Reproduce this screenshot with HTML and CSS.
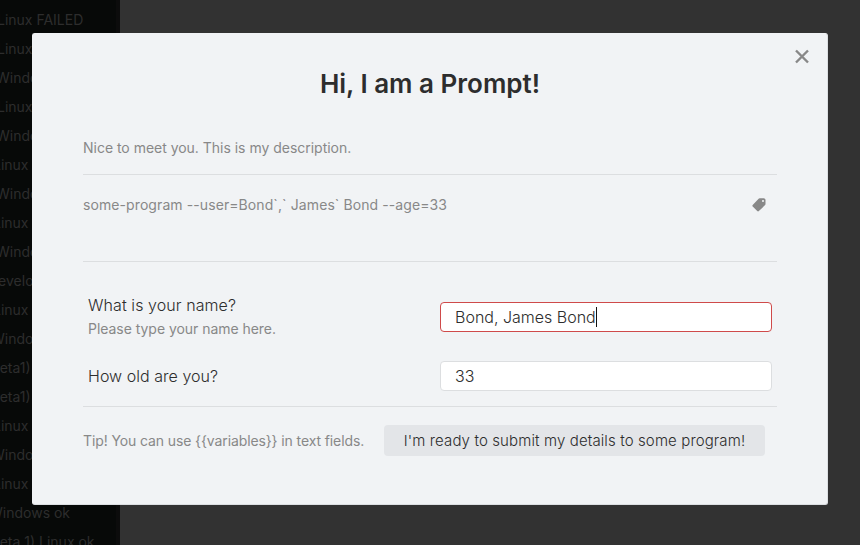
FILE: index.html
```html
<!DOCTYPE html>
<html lang="en">
<head>
<meta charset="utf-8">
<title>Prompt</title>
<link rel="stylesheet" href="styles.css">
</head>
<body>
<div class="app">
  <ul class="sidebar">
    <li class="s1">Linux FAILED</li>
    <li class="s1">Linux</li>
    <li class="s2">Windows</li>
    <li class="s1">Linux</li>
    <li class="s2">Windows</li>
    <li class="s3">Linux</li>
    <li class="s2">Windows</li>
    <li class="s3">Linux</li>
    <li class="s2">Windows</li>
    <li class="s4">Develop</li>
    <li class="s5">Linux ok</li>
    <li class="s6">Windows</li>
    <li class="s7">(beta1)</li>
    <li class="s7">(beta1)</li>
    <li class="s5">Linux ok</li>
    <li class="s6">Windows</li>
    <li class="s5">Linux ok</li>
    <li class="s8">Windows ok</li>
    <li class="s7">(beta 1) Linux ok</li>
  </ul>
</div>
<div class="overlay">
  <main class="modal">
    <button class="close" aria-label="Close"><svg width="16" height="16" viewBox="0 0 16 16"><path d="M2 2.5 14 14.5M14 2.5 2 14.5"/></svg></button>
    <h1>Hi, I am a Prompt!</h1>
    <p class="description">Nice to meet you. This is my description.</p>
    <div class="preview">
      <span class="command">some-program --user=Bond`,` James` Bond --age=33</span>
      <svg class="tag" width="16" height="16" viewBox="0 0 16 16"><path fill-rule="evenodd" d="M8.6 1.2h4.1c1 0 1.8.8 1.8 1.8v4.1c0 .4-.1.7-.4 1l-6.2 6c-.5.5-1.2.5-1.7 0L1.7 9.6c-.5-.5-.5-1.2 0-1.7l5.9-6.2c.3-.3.6-.5 1-.5ZM12 2.9a1 1 0 1 0 0 2 1 1 0 0 0 0-2Z"/></svg>
    </div>
    <div class="field first">
      <div><div class="label">What is your name?</div><div class="hint">Please type your name here.</div></div>
      <div class="input focus">Bond, James Bond<i class="caret"></i></div>
    </div>
    <div class="field second">
      <div class="label">How old are you?</div>
      <div class="input">33</div>
    </div>
    <footer>
      <span class="tip">Tip! You can use {{variables}} in text fields.</span>
      <button class="submit">I'm ready to submit my details to some program!</button>
    </footer>
  </main>
</div>
</body>
</html>
```
FILE: styles.css
```css
* { box-sizing: border-box; }
body {
  margin: 0;
  width: 860px;
  height: 545px;
  overflow: hidden;
  position: relative;
  background: #323232;
  font-family: Inter, "Liberation Sans", sans-serif;
  font-size: 14px;
  color: #888;
}
button { font: inherit; border: 0; background: none; padding: 0; }
.app { height: 545px; overflow: hidden; }
.sidebar {
  width: 120px;
  height: 556px;
  margin: 0;
  padding: 5px 0 0;
  list-style: none;
  overflow: hidden;
  background: linear-gradient(90deg, #070908 0 116px, #0c0c0c 116px);
  color: #2d2d2d;
}
.sidebar li { height: 29px; line-height: 29px; white-space: nowrap; }
.sidebar .s1 { margin-left: -3px; }
.sidebar .s2 { margin-left: -4px; }
.sidebar .s3 { margin-left: -7px; }
.sidebar .s4 { margin-left: -12px; }
.sidebar .s5 { margin-left: -7px; }
.sidebar .s6 { margin-left: -9px; }
.sidebar .s7 { margin-left: -14px; }
.sidebar .s8 { margin-left: -11px; }
.overlay { position: absolute; inset: 0; padding: 33px 32px 40px; }
.modal {
  position: relative;
  height: 472px;
  padding: 33px 50px 0;
  background: #f1f3f5;
  border: 1px solid #dcdfe2;
  border-top-color: #f1f3f5;
  border-left-color: #f1f3f5;
  border-radius: 3px;
}
.close { position: absolute; top: 14px; right: 17px; width: 16px; height: 16px; }
.close svg { display: block; fill: none; stroke: #888; stroke-width: 2.4; }
h1 {
  margin: 0;
  height: 34px;
  line-height: 34px;
  font-size: 26px;
  font-weight: 570;
  letter-spacing: 0;
  text-align: center;
  color: #2d2d2d;
}
.description {
  margin: 37px 0 0;
  height: 37px;
  line-height: 20px;
  letter-spacing: -0.02px;
  border-bottom: 1px solid #dcdee0;
}
.preview {
  display: flex;
  justify-content: space-between;
  height: 87px;
  padding: 20px 10px 0 0;
  line-height: 20px;
  border-bottom: 1px solid #dcdee0;
}
.command { letter-spacing: 0.09px; }
.tag { margin-top: 2px; fill: #888; }
.field {
  display: grid;
  grid-template-columns: 352px 332px;
  padding: 0 5px;
}
.first { padding-top: 32px; height: 92px; }
.first .input { margin-top: 8px; }
.second { height: 53px; padding-top: 7px; border-bottom: 1px solid #dcdee0; }
.label { font-size: 16px; line-height: 22px; font-weight: 300; letter-spacing: 0.08px; color: #2d2d2d; }
.second .label { line-height: 30px; letter-spacing: 0.04px; }
.hint { line-height: 20px; margin-top: 3px; letter-spacing: -0.04px; }
.input {
  display: flex;
  align-items: center;
  height: 30px;
  padding: 0 14px;
  border: 1px solid #dcdee0;
  border-radius: 4px;
  background: #fff;
  color: #2d2d2d;
  font-size: 16px;
  font-weight: 300;
}
.focus { border-color: #cf4a4a; }
.caret { width: 1px; height: 20px; background: #111; }
footer { display: flex; align-items: center; padding: 18px 12px 0 0; justify-content: space-between; white-space: nowrap; }
.tip { letter-spacing: -0.11px; }
.submit {
  width: 381px;
  height: 31px;
  border-radius: 4px;
  background: #e3e5e8;
  color: #2d2d2d;
  font-size: 15px;
  font-weight: 300;
  letter-spacing: 0.12px;
}
```
